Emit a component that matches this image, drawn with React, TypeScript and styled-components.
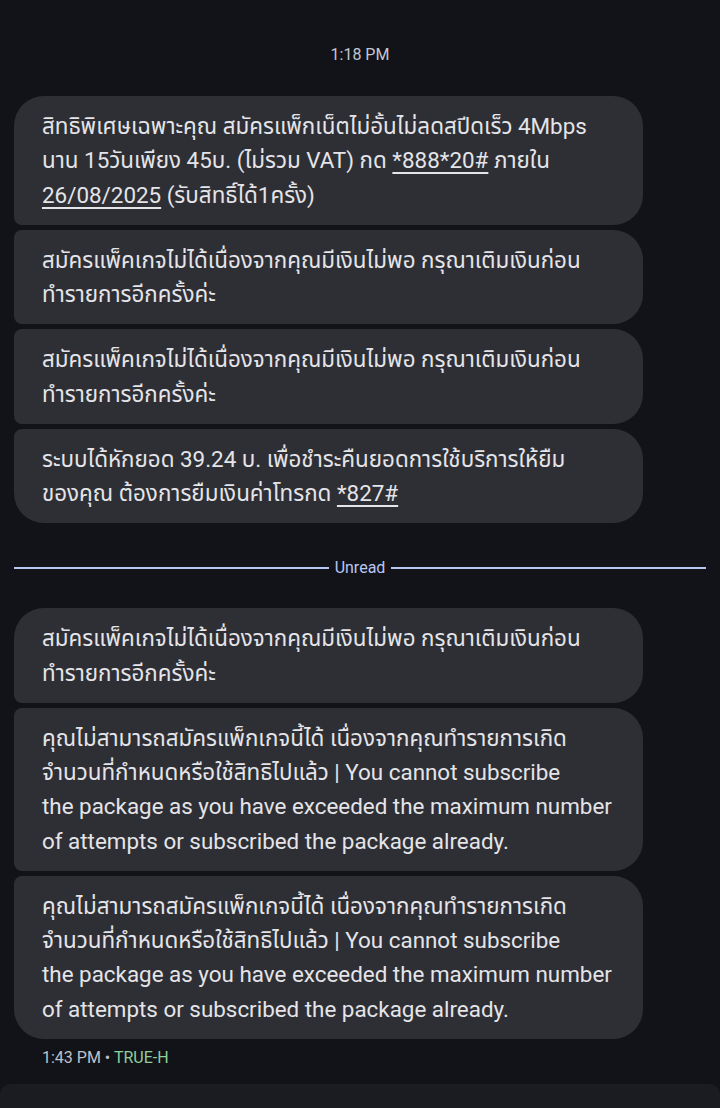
import React from "react";
import styled, { createGlobalStyle } from "styled-components";

const Global = createGlobalStyle`
  html, body { margin: 0; padding: 0; background: #121318; }
  body { font-family: Roboto, "Noto Sans", "Noto Sans Thai", sans-serif; }
  * { box-sizing: border-box; }
`;

const Page = styled.div`
  width: 720px;
  height: 1108px;
  background: #121318;
  display: flex;
  flex-direction: column;
  overflow: hidden;
`;

const Stamp = styled.div`
  text-align: center;
  color: #c4c6cf;
  font-size: 16px;
  line-height: 20px;
  margin-top: 45px;
  margin-bottom: 31px;
`;

const Group = styled.div`
  display: flex;
  flex-direction: column;
  gap: 5px;
  padding: 0 14px;
`;

type Pos = "first" | "middle" | "last" | "single";

const Bubble = styled.div<{ $pos: Pos }>`
  width: 629px;
  background: #2e2f34;
  color: #e4e4e9;
  font-size: 22.4px;
  line-height: 34.25px;
  padding: 13px 20px 13px 28px;
  white-space: nowrap;
  border-radius: ${({ $pos }) =>
    $pos === "first"
      ? "30px 30px 30px 8px"
      : $pos === "last"
      ? "8px 30px 30px 30px"
      : $pos === "single"
      ? "30px"
      : "8px 30px 30px 8px"};
`;

const Link = styled.span`
  text-decoration: underline;
  text-decoration-thickness: 2px;
  text-underline-offset: 4px;
`;

const Divider = styled.div`
  display: flex;
  align-items: center;
  gap: 6px;
  padding: 0 14px;
  margin: 35px 0 30px;
  color: #b9c6f2;
  font-size: 16px;
  line-height: 20px;
`;

const Rule = styled.div`
  flex: 1;
  height: 2px;
  background: #b9c6f2;
`;

const Meta = styled.div`
  padding: 0 42px;
  margin-top: 9px;
  font-size: 16px;
  line-height: 20px;
  color: #bfc1c8;
`;

const Sim = styled.span`
  color: #8fcf9a;
`;

const BottomBar = styled.div`
  margin-top: auto;
  height: 24px;
  background: #1b1c21;
  border-radius: 10px 10px 0 0;
`;

export default function App() {
  return (
    <Page>
      <Global />
      <Stamp>1:18 PM</Stamp>
      <Group>
        <Bubble $pos="first">
          สิทธิพิเศษเฉพาะคุณ สมัครแพ็กเน็ตไม่อั้นไม่ลดสปีดเร็ว 4Mbps
          <br />
          นาน 15วันเพียง 45บ. (ไม่รวม VAT) กด <Link>*888*20#</Link> ภายใน
          <br />
          <Link>26/08/2025</Link> (รับสิทธิ์ได้1ครั้ง)
        </Bubble>
        <Bubble $pos="middle">
          สมัครแพ็คเกจไม่ได้เนื่องจากคุณมีเงินไม่พอ กรุณาเติมเงินก่อน
          <br />
          ทำรายการอีกครั้งค่ะ
        </Bubble>
        <Bubble $pos="middle">
          สมัครแพ็คเกจไม่ได้เนื่องจากคุณมีเงินไม่พอ กรุณาเติมเงินก่อน
          <br />
          ทำรายการอีกครั้งค่ะ
        </Bubble>
        <Bubble $pos="last">
          ระบบได้หักยอด 39.24 บ. เพื่อชำระคืนยอดการใช้บริการให้ยืม
          <br />
          ของคุณ ต้องการยืมเงินค่าโทรกด <Link>*827#</Link>
        </Bubble>
      </Group>
      <Divider>
        <Rule />
        <span>Unread</span>
        <Rule />
      </Divider>
      <Group>
        <Bubble $pos="first">
          สมัครแพ็คเกจไม่ได้เนื่องจากคุณมีเงินไม่พอ กรุณาเติมเงินก่อน
          <br />
          ทำรายการอีกครั้งค่ะ
        </Bubble>
        <Bubble $pos="middle">
          คุณไม่สามารถสมัครแพ็กเกจนี้ได้ เนื่องจากคุณทำรายการเกิด
          <br />
          จำนวนที่กำหนดหรือใช้สิทธิไปแล้ว | You cannot subscribe
          <br />
          the package as you have exceeded the maximum number
          <br />
          of attempts or subscribed the package already.
        </Bubble>
        <Bubble $pos="last">
          คุณไม่สามารถสมัครแพ็กเกจนี้ได้ เนื่องจากคุณทำรายการเกิด
          <br />
          จำนวนที่กำหนดหรือใช้สิทธิไปแล้ว | You cannot subscribe
          <br />
          the package as you have exceeded the maximum number
          <br />
          of attempts or subscribed the package already.
        </Bubble>
      </Group>
      <Meta>
        1:43 PM • <Sim>TRUE-H</Sim>
      </Meta>
      <BottomBar />
    </Page>
  );
}
